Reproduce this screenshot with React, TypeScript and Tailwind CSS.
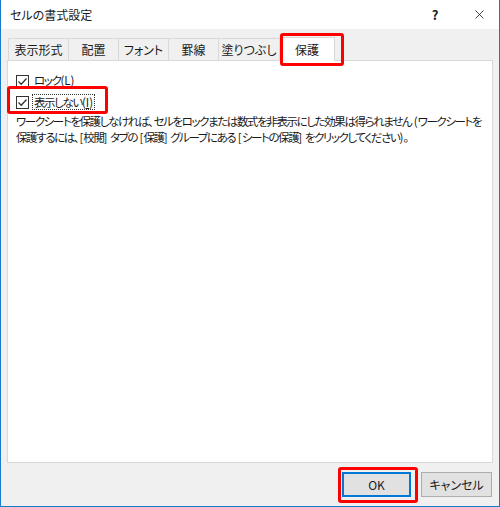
import { X } from "lucide-react";

const font = "font-['Noto_Sans_CJK_JP','Noto_Sans',sans-serif] [font-feature-settings:'palt']";

const tabs = [
  { label: "表示形式", w: "w-[61px]" },
  { label: "配置", w: "w-[51px]" },
  { label: "フォント", w: "w-[51px]" },
  { label: "罫線", w: "w-[51px]" },
  { label: "塗りつぶし", w: "w-[62px]" },
];

const Check = () => (
  <span className="w-[13px] h-[13px] border border-[#333333] bg-white flex items-center justify-center shrink-0">
    <svg width="11" height="11" viewBox="0 0 11 11">
      <path d="M1.5 5.5 L4.2 8.2 L9.5 2.5" fill="none" stroke="#333333" strokeWidth="1.3" />
    </svg>
  </span>
);

// latin bits keep normal spacing
const L = ({ children }: { children: React.ReactNode }) => (
  <span className="tracking-normal">{children}</span>
);

const App = () => {
  return (
    <div className={`relative w-[500px] h-[507px] bg-[#f0f0f0] border-x border-b border-[#1979ca] flex flex-col text-[12px] text-[#1a1a1a] ${font}`}>
      {/* TITLE BAR */}
      <div className="h-[29px] bg-white flex items-center pl-[9px] shrink-0">
        <span className="flex-1">セルの書式設定</span>
        <span className="w-[20px] text-center text-[13px] font-semibold mr-[27px]">?</span>
        <X className="w-[15px] h-[15px] mr-[12px]" strokeWidth={1.3} />
      </div>

      {/* TABS */}
      <div className="flex items-end h-[31px] pl-[7px] shrink-0">
        {tabs.map((t) => (
          <div
            key={t.label}
            className={`${t.w} h-[22px] -ml-px first:ml-0 border border-b-0 border-[#d9d9d9] bg-[#f0f0f0] flex items-center justify-center`}
          >
            {t.label}
          </div>
        ))}
        <div className="w-[56px] h-[24px] -ml-px border border-b-0 border-[#d9d9d9] bg-white flex items-center justify-center relative z-10 -mb-px">
          保護
        </div>
      </div>

      {/* PANEL */}
      <div className="mx-[6px] w-[486px] h-[403px] border border-[#d9d9d9] bg-white px-[8px] pt-[12px] shrink-0 text-[11.5px] tracking-[-1.4px]">
        <div className="flex items-center gap-[5px] h-[16px]">
          <Check />
          <span>ロック<L>(<span className="underline">L</span>)</L></span>
        </div>
        <div className="flex items-center gap-[3px] h-[16px] mt-[5px]">
          <Check />
          <span className="border border-dotted border-[#333333] px-[1px] leading-[14px]">
            表示しない<L>(<span className="underline">I</span>)</L>
          </span>
        </div>
        <p className="mt-[3px] leading-[16px] whitespace-nowrap">
          ワークシートを保護しなければ、 セルをロックまたは数式を非表示にした効果は得られません<L> (</L>ワークシートを
          <br />
          保護するには、 <L>[</L>校閲<L>] </L>タブの<L> [</L>保護<L>] </L>グループにある<L> [</L>シートの保護<L>] </L>をクリックしてください<L>)</L>。
        </p>
      </div>

      {/* BUTTONS */}
      <div className="flex justify-end gap-[10px] pr-[7px] pt-[9px]">
        <button className="w-[69px] h-[25px] border-2 border-[#0078d7] bg-[#e1e1e1] flex items-center justify-center">
          OK
        </button>
        <button className="w-[71px] h-[25px] border border-[#adadad] bg-[#e1e1e1] flex items-center justify-center">
          キャンセル
        </button>
      </div>

      {/* RED ANNOTATION BOXES */}
      <div className="absolute left-[279px] top-[33px] w-[64px] h-[33px] border-[3px] border-[#ff0000] rounded-[3px] z-20" />
      <div className="absolute left-[6px] top-[86px] w-[101px] h-[28px] border-[3px] border-[#ff0000] rounded-[3px] z-20" />
      <div className="absolute left-[337px] top-[467px] w-[80px] h-[36px] border-[3px] border-[#ff0000] rounded-[3px] z-20" />
    </div>
  );
};

export default App;
